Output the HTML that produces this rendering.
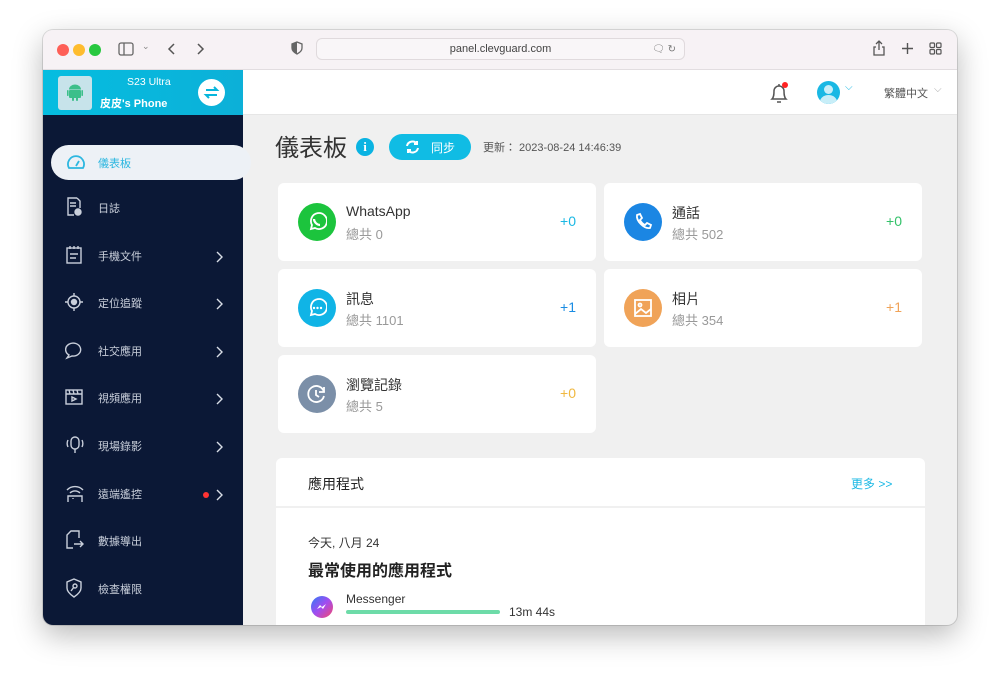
<!DOCTYPE html>
<html><head><meta charset="utf-8">
<style>
*{margin:0;padding:0;box-sizing:border-box}
body{width:1000px;height:682px;background:#fff;font-family:"Liberation Sans","Noto Sans CJK TC",sans-serif;position:relative;overflow:hidden}
.win{position:absolute;left:43px;top:30px;width:914px;height:595px;border-radius:10px;overflow:hidden;box-shadow:0 10px 30px rgba(0,0,0,.28),0 0 0 1px rgba(0,0,0,.12);background:#f0f0f0}
.tb{position:absolute;left:0;top:0;width:914px;height:40px;background:#f7f2f5;border-bottom:1px solid #e2dde0}
.dot{position:absolute;top:14px;width:12px;height:12px;border-radius:50%}
.url{position:absolute;left:273px;top:8px;width:369px;height:22px;border:1px solid #e0dadd;border-radius:6px;background:#f9f6f8;font-size:11px;color:#444;text-align:center;line-height:21px}
.side{position:absolute;left:0;top:40px;width:200px;height:555px;background:#0b1836}
.dev{position:absolute;left:0;top:0;width:200px;height:45px;background:linear-gradient(90deg,#05bde0,#0cb0d8)}
.hdr{position:absolute;left:200px;top:40px;width:714px;height:45px;background:#fff;border-bottom:1px solid #e6e6e6}
.mi{position:absolute;left:0;width:200px;height:36px;color:#c9cfdb;font-size:11px}
.mi span.t{position:absolute;left:55px;top:8px}
.mi svg{position:absolute;left:22px;top:5px}
.mi svg.ch{left:172px;top:11px}
.card{position:absolute;width:318px;height:78px;background:#fff;border-radius:6px}
.card .ic{position:absolute;left:20px;top:20px;width:38px;height:38px;border-radius:50%}
.card .ic svg{position:absolute;left:9px;top:9px}
.card .n{position:absolute;left:68px;top:20px;font-size:14px;color:#333}
.card .s{position:absolute;left:68px;top:41px;font-size:13px;color:#999}
.card .v{position:absolute;right:20px;top:30px;font-size:14px}
</style></head><body>
<div class="win">
 <div class="tb">
  <div class="dot" style="left:14px;background:#fe5f57"></div>
  <div class="dot" style="left:30px;background:#febc2e"></div>
  <div class="dot" style="left:46px;background:#28c840"></div>
  <svg style="position:absolute;left:75px;top:12px" width="16" height="14"><rect x="1" y="1" width="14" height="12" rx="2" fill="none" stroke="#666" stroke-width="1.3"/><line x1="6" y1="1" x2="6" y2="13" stroke="#666" stroke-width="1.3"/></svg>
  <span style="position:absolute;left:99px;top:11px;color:#888;font-size:9px">⌄</span>
  <svg style="position:absolute;left:124px;top:12px" width="10" height="14"><path d="M7 2 L2 7 L7 12" fill="none" stroke="#555" stroke-width="1.5"/></svg>
  <svg style="position:absolute;left:152px;top:12px" width="10" height="14"><path d="M3 2 L8 7 L3 12" fill="none" stroke="#555" stroke-width="1.5"/></svg>
  <svg style="position:absolute;left:248px;top:11px" width="12" height="14"><path d="M6 1 L11 3 V7 C11 10 8 12 6 13 C4 12 1 10 1 7 V3 Z" fill="none" stroke="#666" stroke-width="1.3"/><path d="M6 1 V13 C4 12 1 10 1 7 V3Z" fill="#666"/></svg>
  <div class="url">panel.clevguard.com<span style="position:absolute;right:8px;top:0;color:#777;font-size:10px">🗨 ↻</span></div>
  <svg style="position:absolute;left:829px;top:10px" width="14" height="17"><path d="M7 1 V10 M4 4 L7 1 L10 4 M4 7 H2 V15 H12 V7 H10" fill="none" stroke="#555" stroke-width="1.3"/></svg>
  <svg style="position:absolute;left:858px;top:12px" width="13" height="13"><path d="M6.5 1 V12 M1 6.5 H12" stroke="#555" stroke-width="1.4"/></svg>
  <svg style="position:absolute;left:886px;top:12px" width="13" height="13" fill="none" stroke="#555" stroke-width="1.2"><rect x="1" y="1" width="4.5" height="4.5" rx="1"/><rect x="7.5" y="1" width="4.5" height="4.5" rx="1"/><rect x="1" y="7.5" width="4.5" height="4.5" rx="1"/><rect x="7.5" y="7.5" width="4.5" height="4.5" rx="1"/></svg>
 </div>
 <div class="side">
  <div class="dev">
   <div style="position:absolute;left:15px;top:6px;width:34px;height:34px;background:#c7e3ea;border-radius:3px"></div>
   <svg style="position:absolute;left:24px;top:14px" width="16" height="18" fill="#3cbf8a"><rect x="2" y="6" width="12" height="8" rx="1"/><path d="M2 5.5 A6 5 0 0 1 14 5.5Z"/><rect x="0" y="6" width="1.6" height="6" rx=".8"/><rect x="14.4" y="6" width="1.6" height="6" rx=".8"/><rect x="5" y="13" width="2" height="4" rx="1"/><rect x="9" y="13" width="2" height="4" rx="1"/></svg>
   <div style="position:absolute;left:84px;top:6px;color:#fff;font-size:10.5px">S23 Ultra</div>
   <div style="position:absolute;left:57px;top:25px;color:#fff;font-size:11px;font-weight:bold">皮皮's Phone</div>
   <div style="position:absolute;left:155px;top:9px;width:27px;height:27px;border-radius:50%;background:#fff"></div>
   <svg style="position:absolute;left:159px;top:13px" width="19" height="19"><path d="M4 7 H15 L12 4 M15 12 H4 L7 15" fill="none" stroke="#07b6dc" stroke-width="2"/></svg>
  </div>
  <div style="position:absolute;left:8px;top:75px;width:200px;height:35px;background:#edf1f6;border-radius:18px"></div>
  <svg style="position:absolute;left:23px;top:83px" width="20" height="18" fill="none" stroke="#2db7e0" stroke-width="1.8"><path d="M3 15 A8 8 0 1 1 17 15 Z"/><path d="M10 13 L13 8"/></svg>
  <div style="position:absolute;left:55px;top:85px;color:#2db7e0;font-size:11px">儀表板</div>
  <div class="mi" style="top:122px"><svg width="18" height="20" fill="none" stroke="#c9cfdb" stroke-width="1.4"><path d="M12 1 H3 V18 H9"/><path d="M12 1 L15 4 V11"/><path d="M5 6 H11 M5 9 H11"/><circle cx="13" cy="15" r="3" fill="#c9cfdb"/></svg><span class="t">日誌</span></div>
  <div class="mi" style="top:169.6px"><svg width="18" height="20" fill="none" stroke="#c9cfdb" stroke-width="1.4"><rect x="2" y="3" width="14" height="15"/><path d="M5 1 V4 M9 1 V4 M13 1 V4 M5 9 H13 M5 13 H11"/></svg><span class="t">手機文件</span><svg class="ch" width="8" height="12" fill="none" stroke="#d8dde6" stroke-width="1.4"><path d="M2 1 L7 6 L2 11"/></svg></div>
  <div class="mi" style="top:217.2px"><svg width="18" height="20" fill="none" stroke="#c9cfdb" stroke-width="1.4"><circle cx="9" cy="10" r="6"/><circle cx="9" cy="10" r="2.5" fill="#c9cfdb"/><path d="M9 1 V4 M9 16 V19 M0 10 H3 M15 10 H18"/></svg><span class="t">定位追蹤</span><svg class="ch" width="8" height="12" fill="none" stroke="#d8dde6" stroke-width="1.4"><path d="M2 1 L7 6 L2 11"/></svg></div>
  <div class="mi" style="top:264.8px"><svg width="18" height="20" fill="none" stroke="#c9cfdb" stroke-width="1.4"><path d="M4 15 A7.5 6.5 0 1 1 7 16 L2 18 Z"/></svg><span class="t">社交應用</span><svg class="ch" width="8" height="12" fill="none" stroke="#d8dde6" stroke-width="1.4"><path d="M2 1 L7 6 L2 11"/></svg></div>
  <div class="mi" style="top:312.4px"><svg width="18" height="20" fill="none" stroke="#c9cfdb" stroke-width="1.4"><rect x="1" y="3" width="16" height="14"/><path d="M1 7 H17 M4 3 L5 7 M8 3 L9 7 M12 3 L13 7"/><path d="M7 10 L11 12 L7 14Z"/></svg><span class="t">視頻應用</span><svg class="ch" width="8" height="12" fill="none" stroke="#d8dde6" stroke-width="1.4"><path d="M2 1 L7 6 L2 11"/></svg></div>
  <div class="mi" style="top:360px"><svg width="20" height="20" fill="none" stroke="#c9cfdb" stroke-width="1.4"><rect x="6" y="2" width="8" height="12" rx="4"/><path d="M10 14 V18 M3 5 A8 8 0 0 0 3 12 M17 5 A8 8 0 0 1 17 12"/></svg><span class="t">現場錄影</span><svg class="ch" width="8" height="12" fill="none" stroke="#d8dde6" stroke-width="1.4"><path d="M2 1 L7 6 L2 11"/></svg></div>
  <div class="mi" style="top:407.6px"><svg width="20" height="20" fill="none" stroke="#c9cfdb" stroke-width="1.4"><path d="M2 7 A11 11 0 0 1 18 7 M5 10 A7 7 0 0 1 15 10"/><path d="M3 19 V13 H17 V19"/><path d="M8 15 V16"/></svg><span class="t">遠端遙控</span><span style="position:absolute;left:160px;top:14px;width:6px;height:6px;border-radius:50%;background:#f33"></span><svg class="ch" width="8" height="12" fill="none" stroke="#d8dde6" stroke-width="1.4"><path d="M2 1 L7 6 L2 11"/></svg></div>
  <div class="mi" style="top:455.2px"><svg width="20" height="20" fill="none" stroke="#c9cfdb" stroke-width="1.4"><path d="M14 8 V1 H6 L2 5 V18 H8"/><path d="M9 14 H18 M15 11 L18 14 L15 17"/></svg><span class="t">數據導出</span></div>
  <div class="mi" style="top:502.8px"><svg width="18" height="20" fill="none" stroke="#c9cfdb" stroke-width="1.4"><path d="M9 1 L16 4 V10 C16 14 12 17 9 19 C6 17 2 14 2 10 V4Z"/><circle cx="10" cy="8" r="2"/><path d="M9 9 L6 13"/></svg><span class="t">檢查權限</span></div>
 </div>
 <div class="hdr">
  <svg style="position:absolute;left:526px;top:12px" width="20" height="22" fill="none" stroke="#555" stroke-width="1.5"><path d="M3 17 C5 15 5 12 5 9 A5 5 0 0 1 15 9 C15 12 15 15 17 17 Z"/><path d="M8 20 H12 M10 2 V4"/></svg>
  <div style="position:absolute;left:539px;top:12px;width:6px;height:6px;border-radius:50%;background:#f22"></div>
  <div style="position:absolute;left:574px;top:11px;width:23px;height:23px;border-radius:50%;background:#1ab8e4;overflow:hidden"><div style="position:absolute;left:7px;top:4px;width:9px;height:9px;border-radius:50%;background:#c8eef8"></div><div style="position:absolute;left:3px;top:14px;width:17px;height:14px;border-radius:50%;background:#c8eef8"></div></div>
  <span style="position:absolute;left:602px;top:12px;color:#1ab8e4;font-size:10px">⌵</span>
  <div style="position:absolute;left:641px;top:15px;color:#555;font-size:11px">繁體中文</div>
  <span style="position:absolute;left:691px;top:14px;color:#aaa;font-size:10px">⌵</span>
 </div>
 <div style="position:absolute;left:232px;top:98px;font-size:24px;color:#333">儀表板</div>
 <div style="position:absolute;left:313px;top:108px;width:18px;height:18px;border-radius:50%;background:#0ab3e2;color:#fff;font-size:13px;font-weight:bold;text-align:center;line-height:18px;font-family:'Liberation Serif',serif">i</div>
 <div style="position:absolute;left:346px;top:104px;width:82px;height:26px;border-radius:13px;background:#10bce4;color:#fff;font-size:12px"><svg style="position:absolute;left:16px;top:6px" width="15" height="14" fill="none" stroke="#fff" stroke-width="2"><path d="M2 6 A5.5 5.5 0 0 1 12 4 M13 8 A5.5 5.5 0 0 1 3 10"/><path d="M12 1 V4 H9 M3 13 V10 H6"/></svg><span style="position:absolute;left:42px;top:5px">同步</span></div>
 <div style="position:absolute;left:440px;top:109px;font-size:11px;color:#555">更新： 2023-08-24 14:46:39</div>

 <div class="card" style="left:235px;top:153px"><div class="ic" style="background:#1cc43d"><svg width="20" height="20" fill="none" stroke="#fff" stroke-width="1.8"><path d="M4 17 L5 13 A8 8 0 1 1 8 16 Z"/><path d="M7 7 C7 10 10 13 13 13" stroke-width="2.2"/></svg></div><div class="n">WhatsApp</div><div class="s">總共 0</div><div class="v" style="color:#1ab8e4">+0</div></div>
 <div class="card" style="left:561px;top:153px"><div class="ic" style="background:#1b86e3"><svg width="20" height="20" fill="none" stroke="#fff" stroke-width="1.8"><path d="M4 3 L7 2 L9 6 L7 8 C8 10 10 12 12 13 L14 11 L18 13 L17 16 C11 17 3 9 4 3Z"/></svg></div><div class="n">通話</div><div class="s">總共 502</div><div class="v" style="color:#34c26a">+0</div></div>
 <div class="card" style="left:235px;top:239px"><div class="ic" style="background:#10b4e6"><svg width="20" height="20" fill="#fff"><path d="M4 17 L5 13 A8 8 0 1 1 8 16 Z" fill="none" stroke="#fff" stroke-width="1.8"/><circle cx="7" cy="10" r="1.2"/><circle cx="10.5" cy="10" r="1.2"/><circle cx="14" cy="10" r="1.2"/></svg></div><div class="n">訊息</div><div class="s">總共 1101</div><div class="v" style="color:#1a8ce3">+1</div></div>
 <div class="card" style="left:561px;top:239px"><div class="ic" style="background:#f0a358"><svg width="20" height="20" fill="none" stroke="#fff" stroke-width="1.8"><rect x="2" y="2" width="16" height="16"/><circle cx="7" cy="7" r="1.5"/><path d="M2 16 L8 11 L13 15 L18 11"/></svg></div><div class="n">相片</div><div class="s">總共 354</div><div class="v" style="color:#f0a358">+1</div></div>
 <div class="card" style="left:235px;top:325px"><div class="ic" style="background:#7b8fa8"><svg width="20" height="20" fill="none" stroke="#fff" stroke-width="1.8"><path d="M17 8 A8 8 0 1 0 17 12"/><path d="M17 3 V8 H12"/><path d="M9 6 V11 L12 13"/></svg></div><div class="n">瀏覽記錄</div><div class="s">總共 5</div><div class="v" style="color:#f0b840">+0</div></div>

 <div style="position:absolute;left:233px;top:428px;width:649px;height:180px;background:#fff;border-radius:6px">
  <div style="position:absolute;left:32px;top:16px;font-size:14px;color:#222">應用程式</div>
  <div style="position:absolute;left:575px;top:17px;font-size:12px;color:#1ab8e4">更多 &gt;&gt;</div>
  <div style="position:absolute;left:0;top:48px;width:649px;height:2px;background:#f0f0f0"></div>
  <div style="position:absolute;left:32px;top:76px;font-size:12px;color:#333">今天, 八月 24</div>
  <div style="position:absolute;left:32px;top:99px;font-size:16px;color:#222;font-weight:bold">最常使用的應用程式</div>
  <div style="position:absolute;left:35px;top:138px;width:22px;height:22px;border-radius:50%;background:linear-gradient(135deg,#2e7df6,#a24cf0,#f5486c)"></div>
  <svg style="position:absolute;left:40px;top:144px" width="12" height="10"><path d="M1 7 L4 3 L6 5 L10 2 L7 7 L5 5 Z" fill="#fff"/></svg>
  <div style="position:absolute;left:70px;top:134px;font-size:12px;color:#333">Messenger</div>
  <div style="position:absolute;left:70px;top:152px;width:154px;height:4px;border-radius:2px;background:#6ddba8"></div>
  <div style="position:absolute;left:233px;top:147px;font-size:12px;color:#333">13m 44s</div>
 </div>
</div>
</body></html>
